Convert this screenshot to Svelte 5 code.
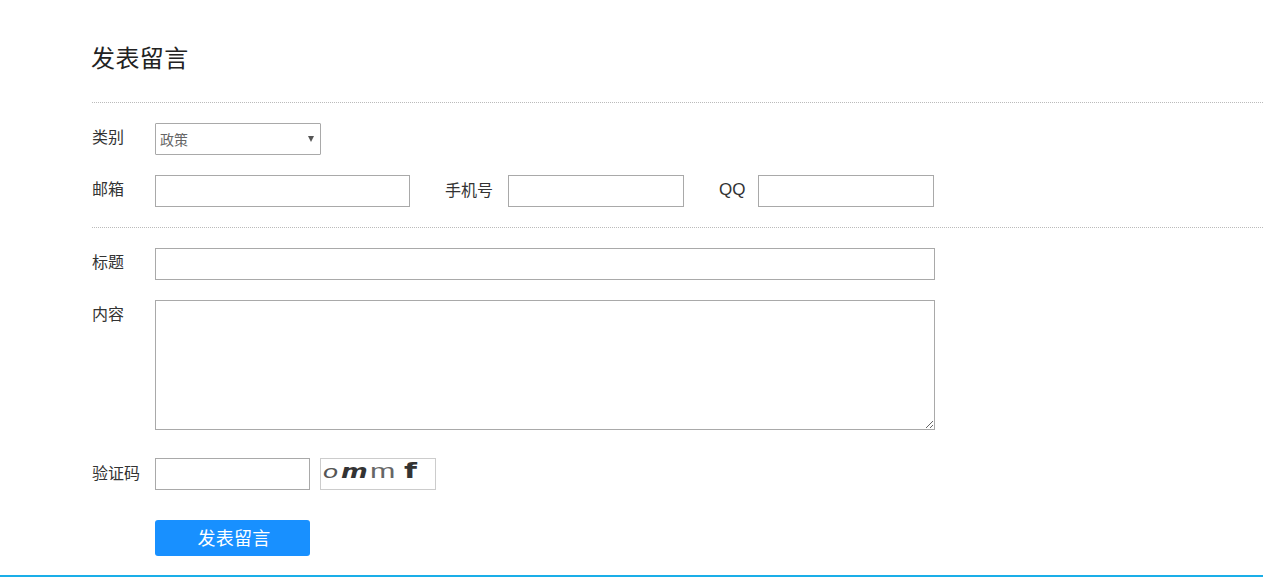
<script lang="ts">
  // Message form; the captcha is a static placeholder
  const categories = ['政策', '咨询', '投诉'];
  let category = $state(categories[0]);
  const captcha = [
    { ch: 'o', cls: 'c1' },
    { ch: 'm', cls: 'c2' },
    { ch: 'm', cls: 'c3' },
    { ch: 'f', cls: 'c4' }
  ];
</script>

<div class="page">
  <form class="board" onsubmit={(e) => e.preventDefault()}>
    <h2 class="title">发表留言</h2>

    <div class="group">
      <div class="row">
        <label class="label" for="cat">类别</label>
        <div class="select-wrap">
          <select id="cat" class="select" bind:value={category}>
            {#each categories as c (c)}
              <option value={c}>{c}</option>
            {/each}
          </select>
        </div>
      </div>
      <div class="row">
        <label class="label" for="mail">邮箱</label>
        <input id="mail" class="input w-mail" type="text" />
        <label class="label-inline first" for="phone">手机号</label>
        <input id="phone" class="input w-short" type="text" />
        <label class="label-inline qq" for="qq">QQ</label>
        <input id="qq" class="input w-short" type="text" />
      </div>
    </div>

    <div class="group last">
      <div class="row">
        <label class="label" for="subject">标题</label>
        <input id="subject" class="input w-full" type="text" />
      </div>
      <div class="row top">
        <label class="label" for="body">内容</label>
        <textarea id="body" class="input area"></textarea>
      </div>
      <div class="row code">
        <label class="label" for="code">验证码</label>
        <input id="code" class="input w-code" type="text" />
        <div class="captcha" aria-label="验证码图片">
          {#each captcha as c}
            <span class={c.cls}>{c.ch}</span>
          {/each}
        </div>
      </div>
      <div class="row submit">
        <button class="btn" type="submit">发表留言</button>
      </div>
    </div>
  </form>
</div>

<style>
  :global(body) {
    margin: 0;
    background: #fff;
    overflow: hidden;
  }

  .page {
    height: 577px;
    box-sizing: border-box;
    border-bottom: 2px solid #1aaee8;
    padding-left: 92px;
    font-family: "Noto Sans CJK SC", "Liberation Sans", sans-serif;
    color: #333;
    overflow: hidden;
  }

  .title {
    margin: 0;
    height: 102px;
    box-sizing: border-box;
    padding-top: 39px;
    font-size: 24px;
    line-height: 36px;
    font-weight: 400;
    color: #222;
    text-indent: -1px;
    letter-spacing: 0.4px;
  }

  .group {
    border-top: 1px dotted #bbb;
    padding-top: 20px;
    padding-bottom: 20px;
  }

  .group.last {
    padding-bottom: 0;
  }

  .row {
    display: flex;
    align-items: center;
    height: 32px;
    margin-bottom: 20px;
  }

  .group > .row:nth-child(2):not(.top) {
    margin-bottom: 0;
  }

  .row.top {
    height: 130px;
    align-items: flex-start;
    margin-bottom: 28px;
  }

  .row.top .label {
    line-height: 28px;
    margin-top: -1px;
  }

  .row.code {
    margin-bottom: 30px;
  }

  .row.code .label {
    margin-top: -4px;
  }

  .row.submit {
    height: 36px;
    margin-bottom: 0;
    padding-left: 63px;
  }

  .label {
    width: 63px;
    flex: none;
    font-size: 16px;
    line-height: 24px;
    margin-top: -6px;
  }

  .label-inline {
    flex: none;
    font-size: 16px;
    line-height: 24px;
    margin: -4px 14px 0 35px;
  }

  .label-inline.first {
    margin-right: 15px;
  }

  .label-inline.qq {
    font-family: "Liberation Sans", sans-serif;
    font-size: 17px;
    width: 26px;
    margin-right: 13px;
    margin-top: -2px;
  }

  .select,
  .input {
    box-sizing: border-box;
    border: 1px solid #a9a9a9;
    border-radius: 0;
    background: #fff;
    margin: 0;
    height: 32px;
    outline: none;
    font-family: inherit;
  }

  .select-wrap {
    position: relative;
    width: 166px;
    height: 32px;
  }

  /* small native-looking arrow */
  .select-wrap::after {
    content: '';
    position: absolute;
    top: 13px;
    right: 7px;
    border-style: solid;
    border-width: 6px 3px 0 3px;
    border-color: #555 transparent transparent transparent;
    pointer-events: none;
  }

  .select {
    display: block;
    width: 100%;
    font-size: 14px;
    color: #666;
    padding: 0 0 0 4px;
    border-radius: 1px;
    appearance: none;
  }

  .w-mail {
    width: 255px;
  }

  .w-short {
    width: 176px;
  }

  .w-full {
    width: 780px;
  }

  .w-code {
    width: 155px;
  }

  .area {
    display: block;
    width: 780px;
    height: 130px;
  }

  .captcha {
    box-sizing: border-box;
    width: 116px;
    height: 32px;
    margin-left: 10px;
    border: 1px solid #ccc;
    display: flex;
    align-items: baseline;
    overflow: hidden;
    color: #444;
    font-family: "DejaVu Sans", sans-serif;
    line-height: 23px;
  }

  .captcha span {
    display: inline-block;
    transform-origin: left bottom;
  }

  .c1 {
    width: 18px;
    margin-left: 2px;
    font-size: 18px;
    font-style: italic;
    font-family: "Liberation Sans", sans-serif;
    transform: scaleX(1.5);
    color: #555;
  }

  .c2 {
    width: 29px;
    font-size: 19px;
    font-style: italic;
    font-weight: 700;
    color: #333;
    transform: scaleX(1.35);
  }

  .c3 {
    width: 34px;
    font-size: 21px;
    font-weight: 400;
    font-family: "Liberation Sans", sans-serif;
    color: #666;
    transform: scaleX(1.45);
  }

  .c4 {
    font-size: 22px;
    font-weight: 700;
    color: #333;
    transform: scaleX(1.35);
  }

  .btn {
    width: 155px;
    height: 36px;
    border: 0;
    border-radius: 3px;
    background: #1890ff;
    color: #fff;
    font-family: inherit;
    font-size: 18px;
    letter-spacing: 0.3px;
    padding: 0 0 2px 3px;
    cursor: pointer;
  }
</style>
